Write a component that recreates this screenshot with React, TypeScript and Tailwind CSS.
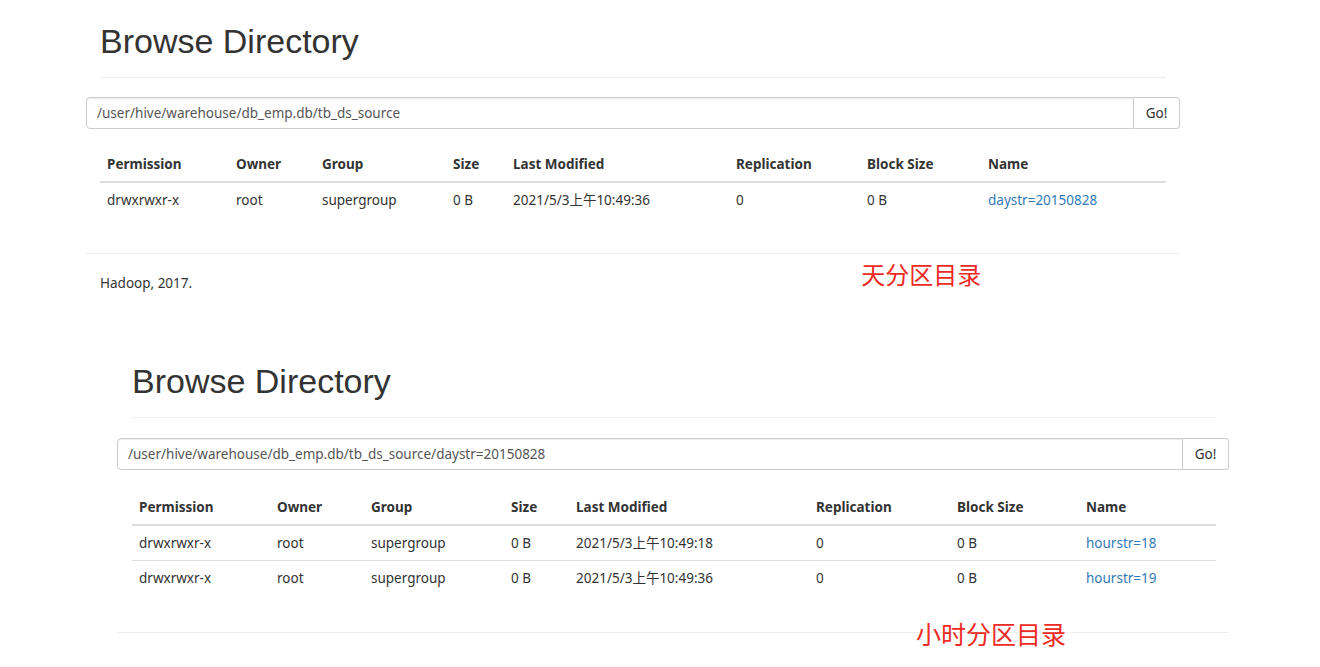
import React from "react";

type Row = {
  permission: string;
  owner: string;
  group: string;
  size: string;
  modified: string;
  replication: string;
  blockSize: string;
  name: string;
};

const headers = [
  "Permission",
  "Owner",
  "Group",
  "Size",
  "Last Modified",
  "Replication",
  "Block Size",
  "Name",
];

const dayRows: Row[] = [
  {
    permission: "drwxrwxr-x",
    owner: "root",
    group: "supergroup",
    size: "0 B",
    modified: "2021/5/3上午10:49:36",
    replication: "0",
    blockSize: "0 B",
    name: "daystr=20150828",
  },
];

const hourRows: Row[] = [
  {
    permission: "drwxrwxr-x",
    owner: "root",
    group: "supergroup",
    size: "0 B",
    modified: "2021/5/3上午10:49:18",
    replication: "0",
    blockSize: "0 B",
    name: "hourstr=18",
  },
  {
    permission: "drwxrwxr-x",
    owner: "root",
    group: "supergroup",
    size: "0 B",
    modified: "2021/5/3上午10:49:36",
    replication: "0",
    blockSize: "0 B",
    name: "hourstr=19",
  },
];

const bodyFont = "font-['Noto_Sans','Noto_Sans_CJK_SC',sans-serif]";

function PathBar({ path }: { path: string }) {
  return (
    <div className="flex h-[32px]">
      <div className="flex flex-1 items-center rounded-l-[4px] border border-[#ccc] px-[10px] text-[13.5px] text-[#555] shadow-[inset_0_1px_1px_rgba(0,0,0,0.075)]">
        {path}
      </div>
      <button className="w-[46px] rounded-r-[4px] border border-l-0 border-[#ccc] bg-white text-[13.5px] text-[#333]">
        Go!
      </button>
    </div>
  );
}

function FileTable({ rows, cols }: { rows: Row[]; cols: string[] }) {
  return (
    <table className="w-full table-fixed border-collapse text-[13.5px] text-[#333]">
      <colgroup>
        {cols.map((w, i) => (
          <col key={i} style={{ width: w }} />
        ))}
      </colgroup>
      <thead>
        <tr className="h-[35px] border-b-2 border-[#ddd]">
          {headers.map((h) => (
            <th key={h} className="px-[7px] text-left font-bold">
              {h}
            </th>
          ))}
        </tr>
      </thead>
      <tbody>
        {rows.map((r, i) => (
          <tr
            key={r.name}
            className={
              i < rows.length - 1 ? "h-[35px] border-b border-[#ddd]" : "h-[35px]"
            }
          >
            <td className="px-[7px]">{r.permission}</td>
            <td className="px-[7px]">{r.owner}</td>
            <td className="px-[7px]">{r.group}</td>
            <td className="px-[7px]">{r.size}</td>
            <td className="px-[7px]">{r.modified}</td>
            <td className="px-[7px]">{r.replication}</td>
            <td className="px-[7px]">{r.blockSize}</td>
            <td className="px-[7px]">
              <a className="text-[#337ab7]">{r.name}</a>
            </td>
          </tr>
        ))}
      </tbody>
    </table>
  );
}

function Heading() {
  return (
    <h1 className="mb-[9px] font-['Liberation_Sans',Arial,sans-serif] text-[34px] font-normal leading-[37px] text-[#333]">
      Browse Directory
    </h1>
  );
}

export default function App() {
  return (
    <div className={`min-h-screen w-[1320px] bg-white ${bodyFont}`}>
      {/* 天分区 */}
      <div className="ml-[86px] w-[1094px] pt-[23px]">
        <div className="mx-[14px] border-b border-[#eee] pb-[8px]">
          <Heading />
        </div>
        <div className="mt-[19px]">
          <PathBar path="/user/hive/warehouse/db_emp.db/tb_ds_source" />
        </div>
        <div className="mx-[14px] mt-[18px]">
          <FileTable
            rows={dayRows}
            cols={["129px", "86px", "131px", "60px", "223px", "131px", "121px", "185px"]}
          />
        </div>
        <div className="mt-[36px] border-t border-[#eee]" />
        <div className="flex items-start">
          <p className="ml-[14px] mt-[19px] text-[13.5px] leading-[20px] text-[#333]">
            Hadoop, 2017.
          </p>
          <span className="ml-[669px] mt-[3px] font-['Noto_Sans_CJK_SC',sans-serif] text-[24px] leading-[34px] text-[#ee2a24]">
            天分区目录
          </span>
        </div>
      </div>

      {/* 小时分区 */}
      <div className="relative ml-[117px] mt-[70px] w-[1112px]">
        <div className="ml-[15px] mr-[13px] border-b border-[#eee] pb-[8px]">
          <Heading />
        </div>
        <div className="mt-[20px]">
          <PathBar path="/user/hive/warehouse/db_emp.db/tb_ds_source/daystr=20150828" />
        </div>
        <div className="ml-[15px] mr-[13px] mt-[20px]">
          <FileTable
            rows={hourRows}
            cols={["138px", "94px", "140px", "65px", "240px", "141px", "129px", "137px"]}
          />
        </div>
        <div className="mt-[37px] border-t border-[#eee]" />
        <span className="absolute left-[799px] top-[100%] -translate-y-1/2 font-['Noto_Sans_CJK_SC',sans-serif] text-[25px] leading-[34px] text-[#ee2a24]">
          小时分区目录
        </span>
      </div>
    </div>
  );
}
